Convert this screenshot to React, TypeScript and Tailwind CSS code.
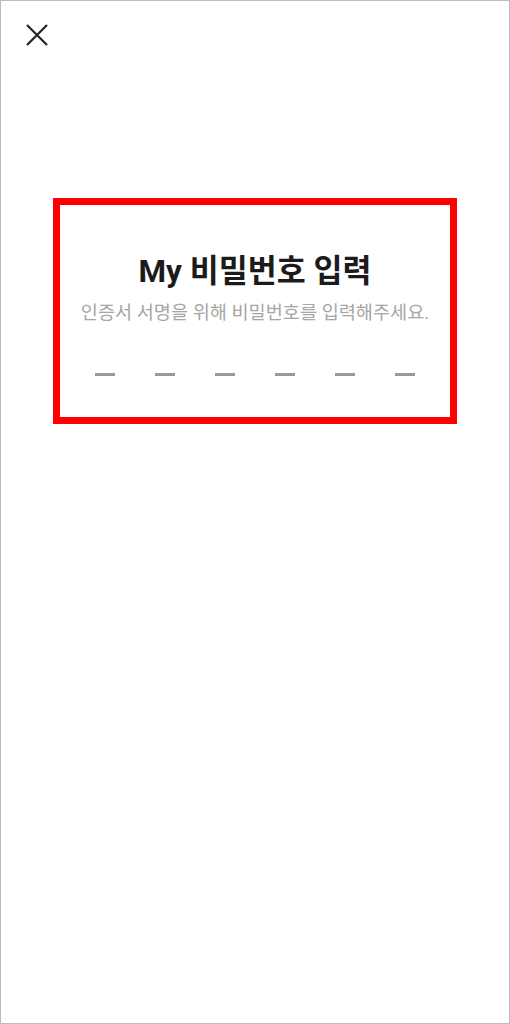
export default function App() {
  const slots = [0, 1, 2, 3, 4, 5]

  return (
    <div
      className="w-[510px] h-[1024px] border border-[#bdbdbd] bg-white"
      style={{ fontFamily: 'Roboto, "Noto Sans CJK KR", sans-serif' }}
    >
      <div className="h-[197px] pt-[23px] pl-[25px]">
        <button className="block">
          <svg width="22" height="22" viewBox="0 0 22 22" fill="none">
            <path d="M1 1L21 21M21 1L1 21" stroke="#222" strokeWidth="2.2" strokeLinecap="butt" />
          </svg>
        </button>
      </div>

      <div className="mx-[52px] h-[226px] border-[7px] border-[#ff0000]">
        <div className="flex flex-col items-center pt-[49px]">
          <h1 className="text-[31.5px] leading-[36px] font-bold text-[#1b1b1b]">My 비밀번호 입력</h1>
          <p className="mt-[11px] text-[18.6px] leading-[24px] text-[#a6a6a6]">
            인증서 서명을 위해 비밀번호를 입력해주세요.
          </p>
          <div className="mt-[48px] flex gap-[40px]">
            {slots.map((i) => (
              <span key={i} className="block w-[20px] h-[3px] bg-[#9a9a9a]" />
            ))}
          </div>
        </div>
      </div>
    </div>
  )
}
